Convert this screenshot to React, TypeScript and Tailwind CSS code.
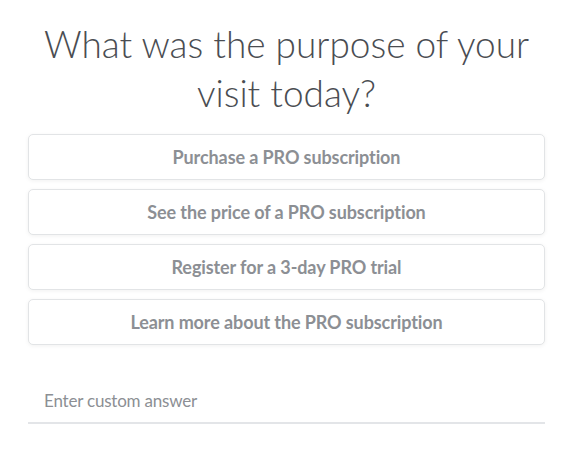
import React from 'react';

const options = [
  'Purchase a PRO subscription',
  'See the price of a PRO subscription',
  'Register for a 3-day PRO trial',
  'Learn more about the PRO subscription',
];

const App: React.FC = () => {
  return (
    <div className="min-h-screen bg-white font-['Lato',sans-serif]">
      <div className="w-[517px] ml-[28px] pt-[19px]">
        <h1 className="text-center text-[37px] leading-[49px] font-light tracking-[0px] text-[#4a4d52]">
          What was the purpose of your visit today?
        </h1>

        <div className="mt-[17px] flex flex-col gap-[9px]">
          {options.map((label) => (
            <button
              key={label}
              className="h-[46px] w-full rounded-[5px] border border-[#e2e4e6] bg-white text-[18px] font-bold tracking-[-0.1px] text-[#8c8f94] shadow-[0_1px_4px_rgba(0,0,0,0.06)]"
            >
              {label}
            </button>
          ))}
        </div>

        <div className="mt-[34px] border-b-2 border-[#e3e5e8]">
          <input
            placeholder="Enter custom answer"
            className="h-[43px] w-full px-[16px] text-[17px] tracking-[-0.2px] text-[#4a4d52] outline-none placeholder:text-[#8c8f94]"
          />
        </div>
      </div>
    </div>
  );
};

export default App;
